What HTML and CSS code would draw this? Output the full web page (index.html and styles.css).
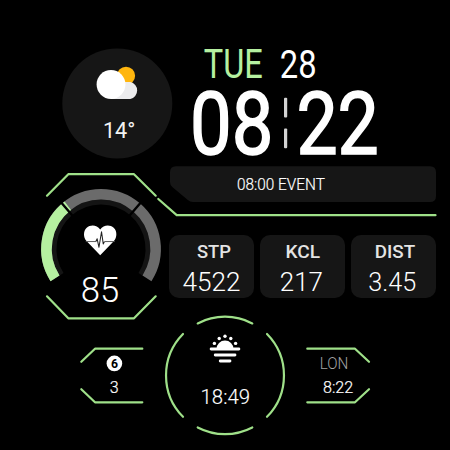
FILE: index.html
```html
<!DOCTYPE html>
<html lang="en">
<head>
<meta charset="utf-8">
<title>Watch face</title>
<link rel="stylesheet" href="styles.css">
</head>
<body>
<main class="face">
  <header class="top">
    <svg class="weather" viewBox="62 48 111 111">
      <circle class="panel" cx="117.3" cy="103.4" r="55"/>
      <circle cx="126" cy="75.8" r="9.1" fill="#ffb60e"/>
      <path d="M111 99V82H130.3A8.7 8.7 0 0 1 130.3 99Z" fill="#ececee"/>
      <circle cx="111" cy="84.5" r="14.4" fill="#fff"/>
      <text class="temp" x="102.9" y="138" textLength="32.5" lengthAdjust="spacingAndGlyphs">14°</text>
    </svg>
    <svg class="clock" viewBox="180 40 210 120">
      <text class="day" x="203.8" y="77.7" textLength="59" lengthAdjust="spacingAndGlyphs">TUE</text>
      <text class="date" x="279.8" y="77.7" textLength="36.8" lengthAdjust="spacingAndGlyphs">28</text>
      <text class="time" x="190" y="154.2" textLength="83.4" lengthAdjust="spacingAndGlyphs">08</text>
      <rect x="284" y="97.8" width="3.2" height="19.6" rx="1" fill="#d4d4d4"/>
      <rect x="284" y="128.5" width="3.2" height="19.8" rx="1" fill="#d4d4d4"/>
      <text class="time" x="296.4" y="154.2" textLength="82.4" lengthAdjust="spacingAndGlyphs">22</text>
    </svg>
  </header>

  <section class="middle">
    <svg class="heart" viewBox="41 166 120 148">
      <path class="line" d="M47 195.7L68.3 174.2H134L155.7 195.7M47 296.3L68.3 318.3H134L155.7 296.3"/>
      <g fill="none" transform="translate(101 249)">
        <path stroke="#141414" stroke-width="5" d="M-39.6 25.3A47 47 0 1 1 39.6 25.3"/>
        <path stroke="#6b6b6b" stroke-width="10.6" d="M-46 29.3A54.6 54.6 0 1 1 46 29.3"/>
        <path stroke="#b5f0a0" stroke-width="10.6" d="M-46 29.3A54.6 54.6 0 0 1 -33.2 -43.3"/>
        <path stroke="#000" stroke-width="2.4" d="M-39.6 -46.2L-28 -32.7M39.6 -46.2L28 -32.7"/>
      </g>
      <g transform="translate(100.2 240.2) scale(.95 .97) translate(-100.2 -240.2)">
        <path fill="#fff" d="M100.2 255.8L86 241.4C82 237 82.4 230.5 86 227.3C90 223.7 96.8 224.2 100.2 229.2C103.6 224.2 110.4 223.7 114.4 227.3C118 230.5 118.4 237 114.4 241.4Z"/>
        <path fill="none" stroke="#555" stroke-width="1" d="M85 241.6H95.5M104.6 241.6H115.6"/>
        <path fill="none" stroke="#222" stroke-width="1.1" stroke-linejoin="round" d="M95.5 241.8L97 238.8L98.9 247.5L101.6 231.5L103.4 244L104.6 241.8"/>
      </g>
      <text class="bpm" x="80.8" y="302" textLength="38.4" lengthAdjust="spacingAndGlyphs">85</text>
    </svg>
    <div class="data">
      <svg class="event" viewBox="169 166 267 54">
        <path class="panel" d="M176 166.3H430Q436 166.3 436 172.3V196Q436 202 430 202H193Q190 202 187.5 199.8L172.3 187Q170 185 170 182V172.3Q170 166.3 176 166.3Z"/>
        <path class="line" d="M158.3 199L176.7 215.2H435.5"/>
        <text class="agenda" x="237" y="190.4" textLength="87.8" lengthAdjust="spacingAndGlyphs">08:00 EVENT</text>
      </svg>
      <div class="cards">
        <svg class="card" viewBox="169 235 85 63">
          <text class="label" x="197" y="258.2" textLength="34" lengthAdjust="spacingAndGlyphs">STP</text>
          <text class="value" x="182.5" y="290.6" textLength="58" lengthAdjust="spacingAndGlyphs">4522</text>
        </svg>
        <svg class="card" viewBox="260 235 85 63">
          <text class="label" x="285.4" y="258.2" textLength="34.6" lengthAdjust="spacingAndGlyphs">KCL</text>
          <text class="value" x="279.8" y="290.6" textLength="43.2" lengthAdjust="spacingAndGlyphs">217</text>
        </svg>
        <svg class="card" viewBox="351 235 85 63">
          <text class="label" x="374.8" y="258.2" textLength="40.4" lengthAdjust="spacingAndGlyphs">DIST</text>
          <text class="value" x="368.3" y="290.6" textLength="48" lengthAdjust="spacingAndGlyphs">3.45</text>
        </svg>
      </div>
    </div>
  </section>

  <footer class="bottom">
    <svg class="side" viewBox="80 344 64 62">
      <path class="line" d="M81.3 361.8L95 348.7H142.3M81.3 389.2L95 402.3H142.3"/>
      <circle cx="114.4" cy="363.4" r="7.8" fill="#fff"/>
      <text class="badge" x="114.4" y="367.7" text-anchor="middle">6</text>
      <text class="small" x="114.3" y="392.7" text-anchor="middle">3</text>
    </svg>
    <svg class="sun" viewBox="164 314 122 124">
      <path class="line" d="M183 334A59 59 0 0 0 183 416.8M267 334A59 59 0 0 1 267 416.8M197.7 323.4A59 59 0 0 1 252.3 323.4M197.7 427.4A59 59 0 0 0 252.3 427.4"/>
      <g fill="#fff">
        <path d="M216.5 349A8.5 8.5 0 0 1 233.5 349Z"/>
        <rect x="209.7" y="347.6" width="30.6" height="2.8" rx="1.4"/>
        <rect x="213.8" y="353.6" width="22.6" height="2.8" rx="1.4"/>
        <rect x="218.8" y="359.5" width="12.6" height="2.9" rx="1.4"/>
        <circle cx="225" cy="336.2" r="1.7"/>
        <circle cx="219.2" cy="338.5" r="1.7"/><circle cx="230.8" cy="338.5" r="1.7"/>
        <circle cx="214.4" cy="343.4" r="1.7"/><circle cx="235.6" cy="343.4" r="1.7"/>
      </g>
      <text class="sunset" x="200.6" y="404" textLength="49.4" lengthAdjust="spacingAndGlyphs">18:49</text>
    </svg>
    <svg class="side" viewBox="306 344 64 62">
      <path class="line" d="M307.3 348.7H355L369 361.8M307.3 402.3H355L369 389.2"/>
      <text class="small city" x="319.8" y="369.3" textLength="28.6" lengthAdjust="spacingAndGlyphs">LON</text>
      <text class="small zone" x="323" y="393" textLength="30.2" lengthAdjust="spacingAndGlyphs">8:22</text>
    </svg>
  </footer>
</main>
</body>
</html>
```
FILE: styles.css
```css
body {
  margin: 0;
  background: #000;
}

.face {
  width: 450px;
  height: 450px;
  display: flex;
  flex-direction: column;
  overflow: hidden;
  background: #000;
  color: #fff;
  font-family: Roboto, "Liberation Sans", sans-serif;
}

svg {
  display: block;
  flex: none;
  overflow: visible;
}

text { fill: #fff; }
.panel { fill: #161616; }
.line {
  fill: none;
  stroke: #9fe089;
  stroke-width: 2.2;
  stroke-linecap: round;
  stroke-linejoin: round;
}

.top {
  display: flex;
  gap: 7px;
  height: 126px;
  padding: 40px 60px 0 62px;
}
.weather { width: 111px; height: 111px; margin-top: 8px; }
.clock { width: 210px; height: 120px; }
.temp { font-size: 21.5px; fill: #f2f2f2; }
.day { font-size: 39.8px; fill: #b5f0a0; }
.date { font-size: 39.2px; }
.time { font-size: 88px; font-weight: 400; stroke: #fff; stroke-width: 1.6px; }

.middle {
  display: flex;
  gap: 8px;
  height: 148px;
  padding-left: 41px;
}
.heart { width: 120px; height: 148px; }
.bpm { font-size: 35px; font-weight: 300; }
.data { display: flex; flex-direction: column; gap: 15px; }
.event { width: 267px; height: 54px; }
.agenda { font-size: 16.6px; font-weight: 300; stroke: #fff; stroke-width: 0.2px; }
.cards { display: flex; gap: 6px; }
.card {
  width: 85px;
  height: 63px;
  border-radius: 10px;
  background: #161616;
}
.label { font-size: 19px; font-weight: 500; fill: #e4e4e4; }
.value { font-size: 26.2px; font-weight: 300; }

.bottom {
  display: flex;
  align-items: center;
  gap: 20px;
  height: 124px;
  padding-left: 80px;
}
.side { width: 64px; height: 62px; position: relative; top: -1px; }
.sun { width: 122px; height: 124px; }
.badge { font-size: 12.2px; font-weight: 700; fill: #000; }
.small { font-size: 16px; font-weight: 300; stroke: #fff; stroke-width: 0.2px; }
.city { fill: #a4a4a4; stroke: none; }
.sunset { font-size: 20.8px; font-weight: 300; stroke: #fff; stroke-width: 0.15px; }
```
